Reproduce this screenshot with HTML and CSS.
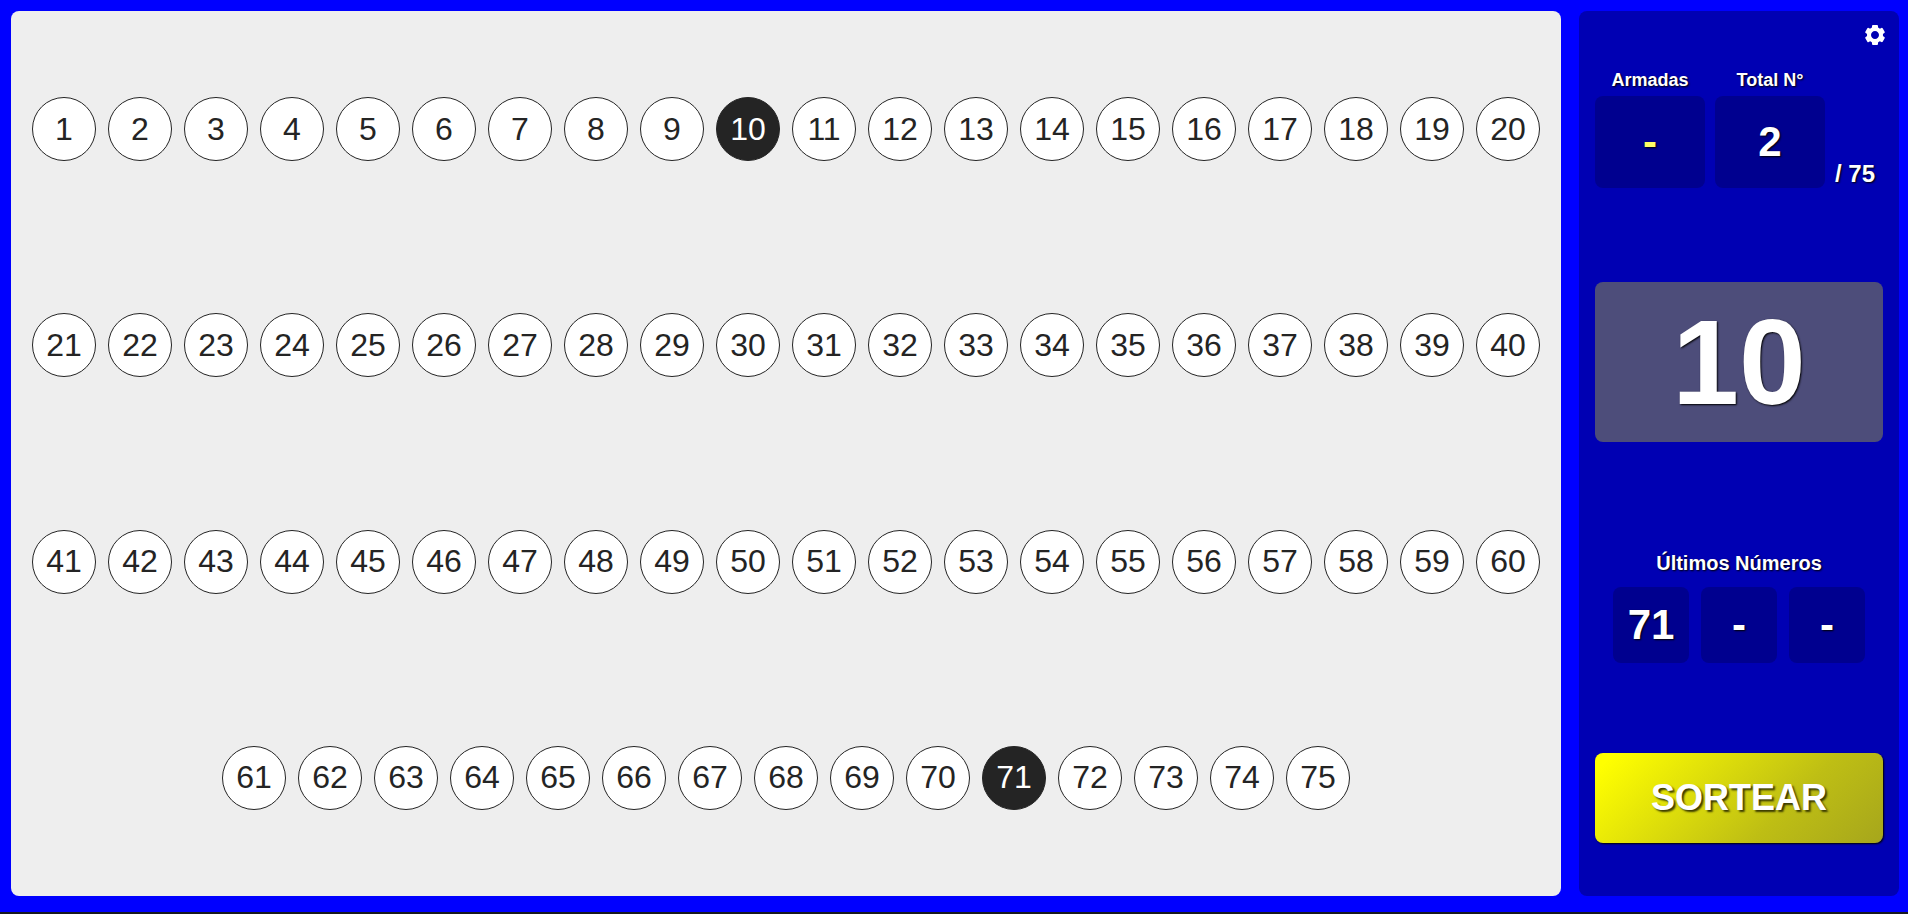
FILE: index.html
```html
<!DOCTYPE html>
<html lang="es">
<head>
<meta charset="utf-8">
<meta name="viewport" content="width=device-width, initial-scale=1">
<title>Bingo</title>
<link rel="stylesheet" href="styles.css">
</head>
<body>
<main class="game">
  <ol class="board">
    <li class="ball">1</li><li class="ball">2</li><li class="ball">3</li><li class="ball">4</li><li class="ball">5</li>
    <li class="ball">6</li><li class="ball">7</li><li class="ball">8</li><li class="ball">9</li><li class="ball drawn">10</li>
    <li class="ball">11</li><li class="ball">12</li><li class="ball">13</li><li class="ball">14</li><li class="ball">15</li>
    <li class="ball">16</li><li class="ball">17</li><li class="ball">18</li><li class="ball">19</li><li class="ball">20</li>
    <li class="ball">21</li><li class="ball">22</li><li class="ball">23</li><li class="ball">24</li><li class="ball">25</li>
    <li class="ball">26</li><li class="ball">27</li><li class="ball">28</li><li class="ball">29</li><li class="ball">30</li>
    <li class="ball">31</li><li class="ball">32</li><li class="ball">33</li><li class="ball">34</li><li class="ball">35</li>
    <li class="ball">36</li><li class="ball">37</li><li class="ball">38</li><li class="ball">39</li><li class="ball">40</li>
    <li class="ball">41</li><li class="ball">42</li><li class="ball">43</li><li class="ball">44</li><li class="ball">45</li>
    <li class="ball">46</li><li class="ball">47</li><li class="ball">48</li><li class="ball">49</li><li class="ball">50</li>
    <li class="ball">51</li><li class="ball">52</li><li class="ball">53</li><li class="ball">54</li><li class="ball">55</li>
    <li class="ball">56</li><li class="ball">57</li><li class="ball">58</li><li class="ball">59</li><li class="ball">60</li>
    <li class="ball">61</li><li class="ball">62</li><li class="ball">63</li><li class="ball">64</li><li class="ball">65</li>
    <li class="ball">66</li><li class="ball">67</li><li class="ball">68</li><li class="ball">69</li><li class="ball">70</li>
    <li class="ball drawn">71</li><li class="ball">72</li><li class="ball">73</li><li class="ball">74</li><li class="ball">75</li>
  </ol>

  <aside class="panel">
    <button class="settings" type="button" aria-label="Configuración">
      <svg viewBox="0 0 24 24" width="24" height="24" fill="currentColor" aria-hidden="true">
        <path d="m2.344 15.271 2 3.46a1 1 0 0 0 1.366.365l1.396-.806c.58.457 1.221.832 1.895 1.112V21a1 1 0 0 0 1 1h4a1 1 0 0 0 1-1v-1.598a8.094 8.094 0 0 0 1.895-1.112l1.396.806c.477.275 1.091.11 1.366-.365l2-3.46a1.004 1.004 0 0 0-.365-1.366l-1.372-.793a7.683 7.683 0 0 0-.002-2.224l1.372-.793c.476-.275.641-.89.365-1.366l-2-3.46a1 1 0 0 0-1.366-.365l-1.396.806A8.034 8.034 0 0 0 15 4.598V3a1 1 0 0 0-1-1h-4a1 1 0 0 0-1 1v1.598A8.094 8.094 0 0 0 7.105 5.71L5.71 4.904a.999.999 0 0 0-1.366.365l-2 3.46a1.004 1.004 0 0 0 .365 1.366l1.372.793a7.683 7.683 0 0 0 0 2.224l-1.372.793c-.476.275-.641.89-.365 1.366zM12 8c2.206 0 4 1.794 4 4s-1.794 4-4 4-4-1.794-4-4 1.794-4 4-4z"/>
      </svg>
    </button>

    <section class="totals">
      <div class="stat">
        <h2 class="stat-label">Armadas</h2>
        <div class="stat-box highlight">-</div>
      </div>
      <div class="stat">
        <h2 class="stat-label">Total N°</h2>
        <div class="stat-box">2</div>
      </div>
      <span class="limit">/ 75</span>
    </section>

    <div class="current">10</div>

    <section class="history">
      <h2 class="history-title">Últimos Números</h2>
      <ol class="history-list">
        <li class="history-item">71</li>
        <li class="history-item">-</li>
        <li class="history-item">-</li>
      </ol>
    </section>

    <button class="draw" type="button">SORTEAR</button>
  </aside>
</main>
</body>
</html>
```

FILE: styles.css
```css
* {
  box-sizing: border-box;
}

body {
  margin: 0;
  font-family: "Liberation Sans", Arial, sans-serif;
  color: #fff;
}

h2,
ol {
  margin: 0;
  padding: 0;
  list-style: none;
}

.game {
  display: flex;
  gap: 18px;
  min-height: 100vh;
  padding: 11px 9px 16px 11px;
  background: #00f;
  border-bottom: 2px solid #181a20;
}

.board {
  flex: 1;
  display: flex;
  flex-wrap: wrap;
  justify-content: center;
  align-content: space-around;
  column-gap: 12px;
  padding: 10px;
  background: #eee;
  border-radius: 8px;
}

.ball {
  display: flex;
  align-items: center;
  justify-content: center;
  width: 64px;
  height: 64px;
  border: 1px solid #242424;
  border-radius: 50%;
  background: #fff;
  color: #242424;
  font-size: 32px;
}

.drawn {
  background: #242424;
  color: #fff;
}

.panel {
  position: relative;
  flex: 0 0 320px;
  display: flex;
  flex-direction: column;
  justify-content: space-around;
  padding: 8px 16px;
  background: #0000b3;
  border-radius: 8px;
  font-weight: bold;
  text-shadow: 1px 1px 2px #000;
}

.settings {
  position: absolute;
  top: 12px;
  right: 12px;
  display: flex;
  padding: 0;
  border: 0;
  background: none;
  color: #fff;
  cursor: pointer;
}

.totals {
  display: flex;
  gap: 10px;
  padding-bottom: 4px;
}

.stat {
  width: 110px;
}

.stat-label {
  font-size: 18px;
  line-height: 32px;
  text-align: center;
}

.stat-box {
  display: flex;
  align-items: center;
  justify-content: center;
  height: 92px;
  border-radius: 8px;
  background: #00008f;
  font-size: 42px;
}

.highlight {
  color: #ff6;
}

.limit {
  align-self: flex-end;
  font-size: 24px;
  line-height: 28px;
}

.current {
  display: flex;
  align-items: center;
  justify-content: center;
  height: 160px;
  border-radius: 8px;
  background: #4d4d7a;
  font-size: 120px;
}

.history {
  padding-top: 19px;
}

.history-title {
  margin-bottom: 12px;
  font-size: 20px;
  line-height: 24px;
  text-align: center;
}

.history-list {
  display: flex;
  justify-content: center;
  gap: 12px;
}

.history-item {
  display: flex;
  align-items: center;
  justify-content: center;
  width: 76px;
  height: 76px;
  border-radius: 8px;
  background: #00008f;
  font-size: 42px;
}

.draw {
  height: 90px;
  padding: 0;
  border: 0;
  border-radius: 8px;
  background: linear-gradient(135deg, #ff0 5%, #bebe14 65%, #a6a61c);
  box-shadow: 1px 1px 2px #000;
  color: #fff;
  font: bold 36px "Liberation Sans", Arial, sans-serif;
  text-shadow: 2px 2px 2px #3a3a00;
  cursor: pointer;
}
```
